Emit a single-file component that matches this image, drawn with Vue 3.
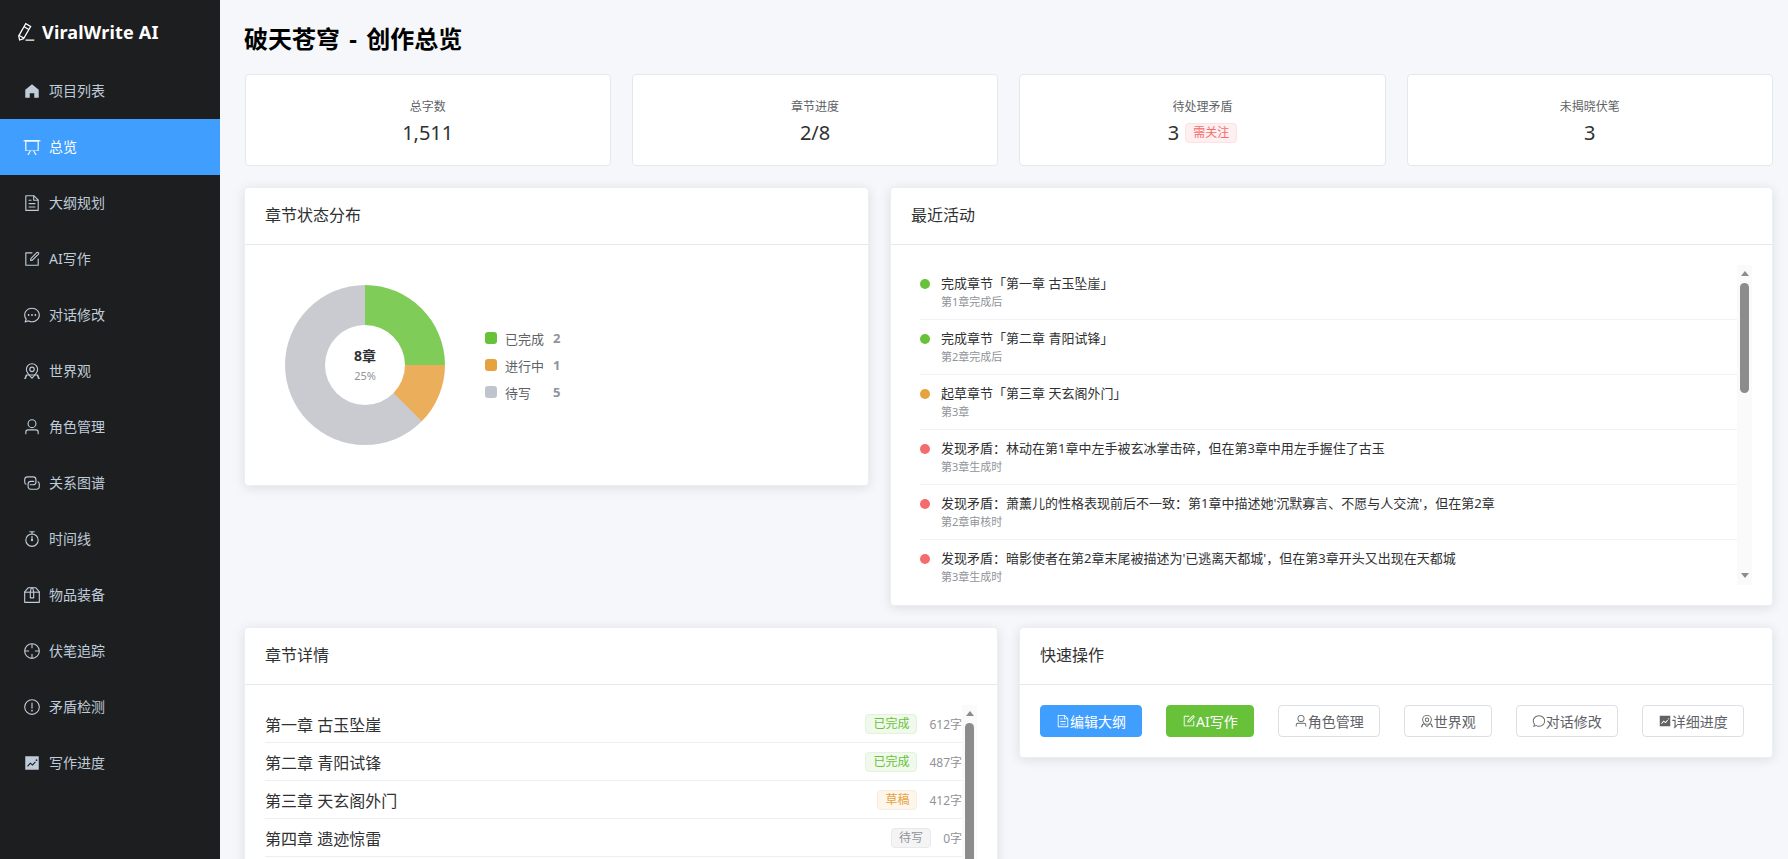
<script setup>
import { ref } from "vue"

const icons = {
  pen: ["m199.04 672.64 193.984 112 224-387.968-193.92-112-224 388.032zm-23.872 60.16 32.896 148.288 144.896-45.696zM455.04 229.248l193.92 112 56.704-98.112-193.984-112zM104.32 708.8l384-665.024 304.768 175.936L409.152 884.8h.064l-248.448 78.336zm384 254.272v-64h448v64h-448z"],
  home: ["M512 128 128 447.936V896h255.936V640H640v256h255.936V447.936z"],
  board: ["M32 128h960v64H32z", "M192 192v512h640V192zm-64-64h768v576a32 32 0 0 1-32 32H160a32 32 0 0 1-32-32z", "M322.176 960H248.32l144.64-250.56 55.424 32zm453.888 0h-73.856L576 741.44l55.424-32z"],
  doc: ["M832 384H576V128H192v768h640zm-26.496-64L640 154.496V320zM160 64h480l256 256v608a32 32 0 0 1-32 32H160a32 32 0 0 1-32-32V96a32 32 0 0 1 32-32m160 448h384v64H320zm0-192h160v64H320zm0 384h384v64H320z"],
  edit: ["M832 512a32 32 0 1 1 64 0v352a32 32 0 0 1-32 32H160a32 32 0 0 1-32-32V160a32 32 0 0 1 32-32h352a32 32 0 0 1 0 64H192v640h640z", "m469.952 554.24 52.8-7.552L847.104 222.4a32 32 0 1 0-45.248-45.248L477.44 501.44l-7.552 52.8zm422.4-422.4a96 96 0 0 1 0 135.808l-331.84 331.84a32 32 0 0 1-18.112 9.088L436.8 623.68a32 32 0 0 1-36.224-36.224l15.104-105.6a32 32 0 0 1 9.024-18.112l331.904-331.84a96 96 0 0 1 135.744 0z"],
  chatDot: ["m174.72 855.68 135.296-45.12 23.68 11.84C388.096 849.536 448.576 864 512 864c211.84 0 384-166.784 384-352S723.84 160 512 160 128 326.784 128 512c0 69.12 24.96 139.264 70.848 199.232l22.08 28.8-46.272 115.584zm-45.248 82.56A32 32 0 0 1 89.6 896l58.368-145.92C94.72 680.32 64 596.864 64 512 64 299.904 256 96 512 96s448 203.904 448 416-192 416-448 416a461.056 461.056 0 0 1-206.912-48.384l-175.616 58.56z", "M512 563.2a51.2 51.2 0 1 1 0-102.4 51.2 51.2 0 0 1 0 102.4m192 0a51.2 51.2 0 1 1 0-102.4 51.2 51.2 0 0 1 0 102.4m-384 0a51.2 51.2 0 1 1 0-102.4 51.2 51.2 0 0 1 0 102.4"],
  chat: ["m174.72 855.68 135.296-45.12 23.68 11.84C388.096 849.536 448.576 864 512 864c211.84 0 384-166.784 384-352S723.84 160 512 160 128 326.784 128 512c0 69.12 24.96 139.264 70.848 199.232l22.08 28.8-46.272 115.584zm-45.248 82.56A32 32 0 0 1 89.6 896l58.368-145.92C94.72 680.32 64 596.864 64 512 64 299.904 256 96 512 96s448 203.904 448 416-192 416-448 416a461.056 461.056 0 0 1-206.912-48.384l-175.616 58.56z"],
  map: ["M800 416a288 288 0 1 0-576 0c0 118.144 94.528 272.128 288 456.576C705.472 688.128 800 534.144 800 416M512 960C277.312 746.688 160 565.312 160 416a352 352 0 0 1 704 0c0 149.312-117.312 330.688-352 544", "M512 512a96 96 0 1 0 0-192 96 96 0 0 0 0 192m0 64a160 160 0 1 1 0-320 160 160 0 0 1 0 320m345.6 128L960 960H672v-64H352v64H64l102.4-256zm-68.928 64H235.328l-76.8 192H352v-64h320v64h193.472z"],
  user: ["M512 512a192 192 0 1 0 0-384 192 192 0 0 0 0 384m0 64a256 256 0 1 1 0-512 256 256 0 0 1 0 512m320 320v-96a96 96 0 0 0-96-96H288a96 96 0 0 0-96 96v96a32 32 0 1 1-64 0v-96a160 160 0 0 1 160-160h448a160 160 0 0 1 160 160v96a32 32 0 1 1-64 0"],
  link: ["M640 384v64H448a128 128 0 0 0-128 128v128a128 128 0 0 0 128 128h320a128 128 0 0 0 128-128V576a128 128 0 0 0-64-110.848V394.88c74.56 26.368 128 97.472 128 181.056v128a192 192 0 0 1-192 192H448a192 192 0 0 1-192-192V576a192 192 0 0 1 192-192z", "M384 640v-64h192a128 128 0 0 0 128-128V320a128 128 0 0 0-128-128H256a128 128 0 0 0-128 128v128a128 128 0 0 0 64 110.848v70.272A192.064 192.064 0 0 1 64 448V320a192 192 0 0 1 192-192h320a192 192 0 0 1 192 192v128a192 192 0 0 1-192 192z"],
  timer: ["M512 896a320 320 0 1 0 0-640 320 320 0 0 0 0 640m0 64a384 384 0 1 1 0-768 384 384 0 0 1 0 768", "M512 320a32 32 0 0 1 32 32l-.512 224a32 32 0 1 1-64 0L480 352a32 32 0 0 1 32-32", "M448 576a64 64 0 1 0 128 0 64 64 0 1 0-128 0m96-448v128h-64V128h-96a32 32 0 0 1 0-64h256a32 32 0 1 1 0 64z"],
  box: ["M317.056 128 128 344.064V896h768V344.064L706.944 128zm-14.528-64h418.944a32 32 0 0 1 24.064 10.88l206.528 236.096A32 32 0 0 1 960 332.032V928a32 32 0 0 1-32 32H96a32 32 0 0 1-32-32V332.032a32 32 0 0 1 7.936-21.12L278.4 75.008A32 32 0 0 1 302.528 64z", "M64 320h896v64H64z", "M448 327.872V640h128V327.872L526.08 128h-28.16zM448 64h128l64 256v352a32 32 0 0 1-32 32H416a32 32 0 0 1-32-32V320z"],
  aim: ["M512 896a384 384 0 1 0 0-768 384 384 0 0 0 0 768m0 64a448 448 0 1 1 0-896 448 448 0 0 1 0 896", "M512 96a32 32 0 0 1 32 32v192a32 32 0 0 1-64 0V128a32 32 0 0 1 32-32m0 576a32 32 0 0 1 32 32v192a32 32 0 1 1-64 0V704a32 32 0 0 1 32-32M96 512a32 32 0 0 1 32-32h192a32 32 0 0 1 0 64H128a32 32 0 0 1-32-32m576 0a32 32 0 0 1 32-32h192a32 32 0 1 1 0 64H704a32 32 0 0 1-32-32"],
  warn: ["M512 64a448 448 0 1 1 0 896 448 448 0 0 1 0-896m0 832a384 384 0 0 0 0-768 384 384 0 0 0 0 768m48-176a48 48 0 1 1-96 0 48 48 0 0 1 96 0m-48-464a32 32 0 0 1 32 32v288a32 32 0 0 1-64 0V288a32 32 0 0 1 32-32"],
  trend: ["M128 896V128h768v768zm291.712-327.296 128 102.4 180.16-201.792-47.744-42.624-139.84 156.608-128-102.4-180.16 201.792 47.744 42.624zM816 352a48 48 0 1 0-96 0 48 48 0 0 0 96 0"],
}

const menu = [
  { label: "项目列表", icon: "home" },
  { label: "总览", icon: "board", active: true },
  { label: "大纲规划", icon: "doc" },
  { label: "AI写作", icon: "edit" },
  { label: "对话修改", icon: "chatDot" },
  { label: "世界观", icon: "map" },
  { label: "角色管理", icon: "user" },
  { label: "关系图谱", icon: "link" },
  { label: "时间线", icon: "timer" },
  { label: "物品装备", icon: "box" },
  { label: "伏笔追踪", icon: "aim" },
  { label: "矛盾检测", icon: "warn" },
  { label: "写作进度", icon: "trend" },
]

const legend = [
  { label: "已完成", count: 2, color: "#67c23a" },
  { label: "进行中", count: 1, color: "#e6a23c" },
  { label: "待写", count: 5, color: "#c0c4cc" },
]

const activities = ref([
  { text: "完成章节「第一章 古玉坠崖」", time: "第1章完成后", color: "#67c23a" },
  { text: "完成章节「第二章 青阳试锋」", time: "第2章完成后", color: "#67c23a" },
  { text: "起草章节「第三章 天玄阁外门」", time: "第3章", color: "#e6a23c" },
  { text: "发现矛盾：林动在第1章中左手被玄冰掌击碎，但在第3章中用左手握住了古玉", time: "第3章生成时", color: "#f56c6c" },
  { text: "发现矛盾：萧薰儿的性格表现前后不一致：第1章中描述她'沉默寡言、不愿与人交流'，但在第2章", time: "第2章审核时", color: "#f56c6c" },
  { text: "发现矛盾：暗影使者在第2章末尾被描述为'已逃离天都城'，但在第3章开头又出现在天都城", time: "第3章生成时", color: "#f56c6c" },
])

const chapters = ref([
  { title: "第一章 古玉坠崖", status: "已完成", type: "success", words: 612 },
  { title: "第二章 青阳试锋", status: "已完成", type: "success", words: 487 },
  { title: "第三章 天玄阁外门", status: "草稿", type: "warning", words: 412 },
  { title: "第四章 遗迹惊雷", status: "待写", type: "info", words: 0 },
])

const actions = [
  { label: "编辑大纲", icon: "doc", kind: "primary" },
  { label: "AI写作", icon: "edit", kind: "success" },
  { label: "角色管理", icon: "user" },
  { label: "世界观", icon: "map" },
  { label: "对话修改", icon: "chat" },
  { label: "详细进度", icon: "trend" },
]
</script>

<template>
  <div class="layout">
    <aside class="sidebar">
      <div class="logo">
        <svg class="logo-icon" viewBox="0 0 1024 1024"><path v-for="d in icons.pen" :key="d" :d="d" /></svg>
        <span>ViralWrite AI</span>
      </div>
      <nav>
        <div v-for="item in menu" :key="item.label" class="menu-item" :class="{ active: item.active }">
          <span class="menu-icon">
            <svg viewBox="0 0 1024 1024"><path v-for="d in icons[item.icon]" :key="d" :d="d" /></svg>
          </span>
          <span class="menu-text">{{ item.label }}</span>
        </div>
      </nav>
    </aside>

    <main class="main">
      <h2 class="title">破天苍穹 - 创作总览</h2>

      <div class="stats">
        <div class="stat">
          <div class="stat-label">总字数</div>
          <div class="stat-value">1,511</div>
        </div>
        <div class="stat">
          <div class="stat-label">章节进度</div>
          <div class="stat-value">2/8</div>
        </div>
        <div class="stat">
          <div class="stat-label">待处理矛盾</div>
          <div class="stat-value">3<span class="tag danger stat-tag">需关注</span></div>
        </div>
        <div class="stat">
          <div class="stat-label">未揭晓伏笔</div>
          <div class="stat-value">3</div>
        </div>
      </div>

      <div class="row row-a">
        <section class="card">
          <header class="card-head">章节状态分布</header>
          <div class="card-body donut-wrap">
            <div class="donut">
              <div class="donut-hole">
                <div class="donut-num">8章</div>
                <div class="donut-pct">25%</div>
              </div>
            </div>
            <div class="legend">
              <div v-for="l in legend" :key="l.label" class="legend-row">
                <i class="legend-dot" :style="{ background: l.color }"></i>
                <span class="legend-label">{{ l.label }}</span>
                <b class="legend-count">{{ l.count }}</b>
              </div>
            </div>
          </div>
        </section>

        <section class="card">
          <header class="card-head">最近活动</header>
          <div class="card-body">
            <div class="scroll-box activity-box">
              <div class="scroll-view activity-list">
                <div v-for="a in activities" :key="a.text" class="activity">
                  <i class="activity-dot" :style="{ background: a.color }"></i>
                  <div>
                    <div class="activity-text">{{ a.text }}</div>
                    <div class="activity-time">{{ a.time }}</div>
                  </div>
                </div>
              </div>
              <div class="scrollbar">
                <i class="arrow up"></i>
                <i class="thumb activity-thumb"></i>
                <i class="arrow down"></i>
              </div>
            </div>
          </div>
        </section>
      </div>

      <div class="row row-b">
        <section class="card">
          <header class="card-head">章节详情</header>
          <div class="card-body">
            <div class="scroll-box chapter-box">
              <div class="scroll-view">
                <div v-for="c in chapters" :key="c.title" class="chapter">
                  <span class="chapter-title">{{ c.title }}</span>
                  <span class="tag" :class="c.type">{{ c.status }}</span>
                  <span class="chapter-words">{{ c.words }}字</span>
                </div>
              </div>
              <div class="scrollbar">
                <i class="arrow up"></i>
                <i class="thumb chapter-thumb"></i>
                <i class="arrow down"></i>
              </div>
            </div>
          </div>
        </section>

        <section class="card">
          <header class="card-head">快速操作</header>
          <div class="card-body actions">
            <button v-for="b in actions" :key="b.label" class="btn" :class="b.kind">
              <svg viewBox="0 0 1024 1024"><path v-for="d in icons[b.icon]" :key="d" :d="d" /></svg>
              <span>{{ b.label }}</span>
            </button>
          </div>
        </section>
      </div>
    </main>
  </div>
</template>

<style>
html,
body {
  margin: 0;
  overflow: hidden;
}
</style>

<style scoped>
.layout {
  display: flex;
  height: 100vh;
  overflow: hidden;
  font-family: "Noto Sans", "Noto Sans CJK SC", sans-serif;
  color: #303133;
}

svg {
  fill: currentColor;
  display: block;
}

.sidebar {
  width: 220px;
  flex: none;
  background: #1d1e1f;
  color: #bfcbd9;
}

.logo {
  height: 63px;
  display: flex;
  align-items: center;
  gap: 6px;
  padding-left: 16px;
  box-sizing: border-box;
  color: #fff;
  font-size: 18px;
  font-weight: 700;
  letter-spacing: 0.18px;
}

.logo-icon {
  width: 20px;
  height: 20px;
}

.menu-item {
  height: 56px;
  display: flex;
  align-items: center;
  padding-left: 20px;
  font-size: 14px;
}

.menu-text {
  margin-bottom: 2px;
}

.menu-item.active {
  background: #409eff;
  color: #fff;
}

.menu-icon {
  width: 24px;
  margin-right: 5px;
  display: flex;
  justify-content: center;
}

.menu-icon svg {
  width: 18px;
  height: 18px;
}

.main {
  flex: 1;
  min-width: 0;
  padding: 0 15px 0 24px;
  background: #f5f7fa;
  overflow: hidden;
}

.title {
  margin: 0;
  height: 74px;
  line-height: 77px;
  font-size: 24px;
  font-weight: 700;
  color: #000;
  word-spacing: 3px;
}

.stats {
  display: grid;
  grid-template-columns: repeat(4, 1fr);
  gap: 21px;
  margin: 0 0 21px 0.5px;
}

.stat {
  height: 92px;
  box-sizing: border-box;
  background: #fff;
  border: 1px solid #e4e7ed;
  border-radius: 4px;
  text-align: center;
  padding-top: 22px;
}

.stat-label {
  font-size: 12px;
  line-height: 20px;
  color: #606266;
}

.stat-value {
  font-size: 20px;
  line-height: 30px;
  margin-top: 1px;
  color: #303133;
}

.stat-tag {
  margin-left: 6px;
  vertical-align: 3px;
}

.row {
  display: grid;
  gap: 21px;
  align-items: start;
  margin-bottom: 21px;
}

.row-a {
  grid-template-columns: 625fr 883fr;
}

.row-b {
  grid-template-columns: 1fr 1fr;
}

.card {
  background: #fff;
  border: 1px solid #ebeef5;
  border-radius: 4px;
  box-shadow: 0 2px 12px rgba(0, 0, 0, 0.1);
}

.card-head {
  height: 56px;
  line-height: 54px;
  padding: 0 20px;
  font-size: 16px;
  color: #303133;
  border-bottom: 1px solid #e4e7ed;
}

.card-body {
  padding: 20px;
}

.donut-wrap {
  display: flex;
  align-items: center;
  gap: 40px;
  padding-left: 40px;
  height: 200px;
}

.donut {
  width: 160px;
  height: 160px;
  border-radius: 50%;
  background: conic-gradient(#80cc58 0 90deg, #ebaf5c 90deg 135deg, #c9cbd1 135deg 360deg);
  display: flex;
  align-items: center;
  justify-content: center;
}

.donut-hole {
  width: 80px;
  height: 80px;
  border-radius: 50%;
  background: #fff;
  text-align: center;
  display: flex;
  flex-direction: column;
  justify-content: center;
}

.donut-num {
  font-size: 14px;
  font-weight: 700;
  line-height: 20px;
  color: #303133;
}

.donut-pct {
  font-size: 11px;
  line-height: 16px;
  margin-top: 2px;
  color: #909399;
}

.legend {
  display: flex;
  flex-direction: column;
  gap: 9px;
}

.legend-row {
  display: flex;
  align-items: center;
  height: 18px;
  font-size: 13px;
}

.legend-dot {
  width: 12px;
  height: 12px;
  border-radius: 3px;
  margin-right: 8px;
}

.legend-label {
  width: 40px;
  color: #606266;
}

.legend-count {
  margin-left: 8px;
  color: #909399;
}

.scroll-box {
  display: flex;
  overflow: hidden;
}

.scroll-view {
  flex: 1;
  min-width: 0;
  overflow: hidden;
}

.scrollbar {
  width: 15px;
  flex: none;
  display: flex;
  flex-direction: column;
  align-items: center;
  background: #fafafa;
}

.arrow {
  flex: none;
  width: 0;
  height: 0;
  border-left: 4.5px solid transparent;
  border-right: 4.5px solid transparent;
}

.arrow.up {
  margin-top: 6px;
  border-bottom: 5px solid #8c8c8c;
}

.arrow.down {
  margin-top: auto;
  margin-bottom: 7px;
  border-top: 5px solid #8c8c8c;
}

.thumb {
  flex: none;
  width: 9px;
  margin-top: 7px;
  background: #8c8c8c;
  border-radius: 5px;
}

.activity-box {
  height: 320px;
}

.activity-thumb {
  height: 110px;
}

.activity-list {
  padding-left: 9px;
}

.activity {
  display: flex;
  gap: 11px;
  height: 55px;
  box-sizing: border-box;
  padding-top: 9px;
  border-bottom: 1px solid #f0f2f5;
}

.activity-dot {
  width: 10px;
  height: 10px;
  border-radius: 50%;
  flex: none;
  margin-top: 5px;
}

.activity-text {
  font-size: 13px;
  line-height: 18px;
  color: #303133;
}

.activity-time {
  font-size: 11px;
  line-height: 18px;
  margin-top: 1px;
  color: #909399;
}

.chapter-box {
  height: 280px;
}

.chapter-thumb {
  height: 230px;
}

.chapter {
  display: flex;
  align-items: center;
  height: 38px;
  box-sizing: border-box;
  border-bottom: 1px solid #ebeef5;
}

.chapter-title {
  flex: 1;
  font-size: 16px;
  color: #303133;
}

.chapter-words {
  margin-left: 12px;
  font-size: 12px;
  color: #909399;
}

.tag {
  display: inline-block;
  height: 20px;
  line-height: 18px;
  box-sizing: border-box;
  padding: 0 7px;
  font-size: 12px;
  border: 1px solid;
  border-radius: 4px;
}

.tag.success {
  background: #f0f9eb;
  border-color: #e1f3d8;
  color: #67c23a;
}

.tag.warning {
  background: #fdf6ec;
  border-color: #faecd8;
  color: #e6a23c;
}

.tag.info {
  background: #f4f4f5;
  border-color: #e9e9eb;
  color: #909399;
}

.tag.danger {
  background: #fef0f0;
  border-color: #fde2e2;
  color: #f56c6c;
}

.actions {
  display: flex;
  gap: 24px;
}

.btn {
  height: 32px;
  padding: 0 15px;
  display: inline-flex;
  align-items: center;
  font: inherit;
  font-size: 14px;
  color: #606266;
  background: #fff;
  border: 1px solid #dcdfe6;
  border-radius: 4px;
}

.btn svg {
  width: 14px;
  height: 14px;
}

.btn.primary {
  background: #409eff;
  border-color: #409eff;
  color: #fff;
}

.btn.success {
  background: #67c23a;
  border-color: #67c23a;
  color: #fff;
}
</style>
